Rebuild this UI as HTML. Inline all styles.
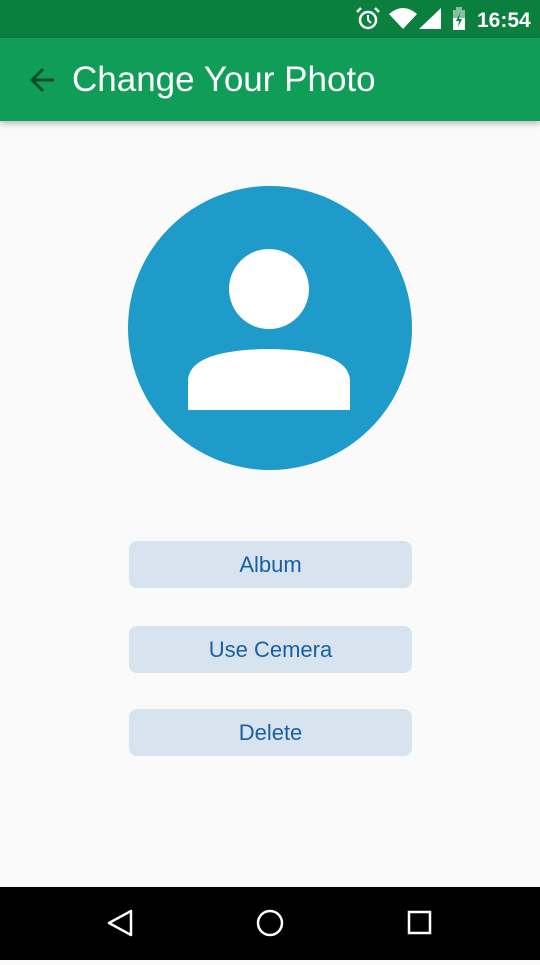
<!DOCTYPE html>
<html><head><meta charset="utf-8"><style>
*{margin:0;padding:0;box-sizing:border-box}
body{width:540px;height:960px;background:#fafafa;font-family:"Liberation Sans",sans-serif;position:relative;overflow:hidden}
.sb{position:absolute;top:0;left:0;width:540px;height:38px;background:#0b7f3e}
.ab{position:absolute;top:38px;left:0;width:540px;height:83px;background:#0f9d58;box-shadow:0 3px 6px rgba(0,0,0,.25)}
.title{position:absolute;left:72px;top:22px;color:#fff;font-size:35px}
.btn{position:absolute;left:129px;width:283px;height:47px;background:#d7e4ef;border-radius:8px;color:#1a5fa0;font-size:22px;text-align:center;line-height:47px}
.nav{position:absolute;left:0;top:887px;width:540px;height:73px;background:#000}
</style></head><body>
<div class="sb">
<svg width="540" height="38" style="position:absolute;left:0;top:0">
<circle cx="368" cy="20" r="8" fill="none" stroke="#fff" stroke-width="2.5"/>
<path d="M368 15v5l3 3" stroke="#fff" stroke-width="2" fill="none"/>
<path d="M357 12l4-4M379 12l-4-4" stroke="#fff" stroke-width="2.5"/>
<path d="M389 14 Q403 2 417 14 L403 29Z" fill="#fff"/>
<path d="M419 29 L441 8 L441 29Z" fill="#fff"/>
<rect x="453" y="10" width="12" height="20" fill="#fff" opacity=".5"/>
<rect x="456" y="7" width="6" height="3" fill="#fff" opacity=".5"/>
<path d="M453 18h12v12h-12z" fill="#fff"/>
<path d="M460 13l-4 8h3l-1 6 4-8h-3z" fill="#0b7f3e"/>
<text x="477" y="27" fill="#fff" font-size="21" font-weight="bold" font-family="Liberation Sans">16:54</text>
</svg>
</div>
<div class="ab">
<svg width="40" height="40" style="position:absolute;left:24px;top:22px"><path d="M30 20H9M19 9L8 20l11 11" stroke="#0b4d2a" stroke-width="3" fill="none"/></svg>
<div class="title">Change Your Photo</div>
</div>
<svg width="540" height="300" style="position:absolute;left:0;top:180px">
<circle cx="270" cy="148" r="142" fill="#1f9bc9"/>
<circle cx="269" cy="109" r="40" fill="#fff"/>
<path d="M188 230 L188 200 Q190 170 269 169 Q348 170 350 200 L350 230Z" fill="#fff"/>
</svg>
<div class="btn" style="top:541px">Album</div>
<div class="btn" style="top:626px">Use Cemera</div>
<div class="btn" style="top:709px">Delete</div>
<div class="nav">
<svg width="540" height="73">
<path d="M131 24 L109 36 L131 48Z" fill="none" stroke="#fff" stroke-width="2.5" stroke-linejoin="round"/>
<circle cx="270" cy="36" r="12" fill="none" stroke="#fff" stroke-width="2.5"/>
<rect x="409" y="25" width="21" height="21" fill="none" stroke="#fff" stroke-width="2.5"/>
</svg>
</div>
</body></html>
